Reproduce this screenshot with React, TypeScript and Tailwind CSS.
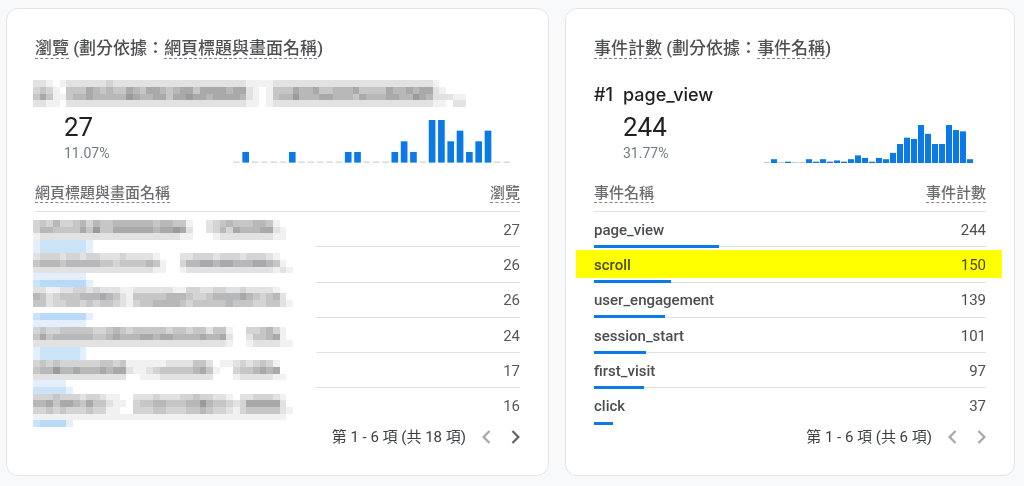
import type { ReactNode } from 'react'

// 0-9 are grey levels, a-c are blue levels, anything else stays blank
const headingMosaic = [
  '22101222222322222222222222222222111122222222222222222222222210000',
  '34310444654544654665456646666566210144465564455564444655656621000',
  '46411455655555765566466766566665210145575556655546555665576522211',
  '22110222222222222222222222222222110122222222222222222222222211022',
]

const listMosaic = [
  '34353345354455555545544100234544455410.',
  '35544446474466666656676200235365556621.',
  '1222222222222222222222110001222222221101',
  'abbbbbbba..............................',
  'abbbbbbba..............................',
  '233323323322232222100022333233323332100',
  '455545555544344445410035566566555665410',
  '222222222222222222110012222222222222121',
  'aaaaaaaa...............................',
  'bccccccca..............................',
  '221122332322211222222113322332232222100',
  '542344455565421444445554334555565434520',
  '442334434344321344555543444445444334421',
  '.......................................',
  'bccccccca..............................',
  'aaaaaaaa...............................',
  '343344444334543444443443442441003345310',
  '464555555445655566566555565562002445610',
  '222222222222222222222222222221001222211',
  'abbbbbba...............................',
  'abbbbbba...............................',
  '343433333344341111112222442011232343100',
  '455755655565662112344444564100344565600',
  '222222222222220011122222222000122222110',
  'aaaaa..................................',
  'bbbbba.................................',
  '333433323321100222322233433221022333210',
  '556466546442110344554445575443236666620',
  '334343334331100333443334454332134444421',
  '111111111111111111111111111111111111110',
  'bcccca.................................',
]

const viewsTrend = [0, 1, 0, 0, 0, 0, 1, 0, 0, 0, 0, 0, 1, 1, 0, 0, 0, 1, 2, 1, 0, 4, 4, 2, 3, 1, 2, 3, 0, 0]
const eventsTrend = [0, 3, 0, 1, 0, 0, 3, 1, 3, 1, 2, 1, 3, 6, 4, 1, 4, 3, 8, 15, 20, 19, 30, 23, 15, 15, 30, 26, 25, 3]

const viewCounts = [27, 26, 26, 24, 17, 16]

const events = [
  { name: 'page_view', count: 244 },
  { name: 'scroll', count: 150, highlight: true },
  { name: 'user_engagement', count: 139 },
  { name: 'session_start', count: 101 },
  { name: 'first_visit', count: 97 },
  { name: 'click', count: 37 },
]
const totalEvents = events.reduce((sum, e) => sum + e.count, 0)

const blues: Record<string, string> = { a: '#e3f0fb', b: '#cbe3f7', c: '#b8daf6' }

function Mosaic({ rows, label, className }: { rows: string[]; label: string; className: string }) {
  return (
    <svg
      role="img"
      aria-label={label}
      viewBox={`0 0 ${rows[0].length} ${rows.length}`}
      preserveAspectRatio="none"
      shapeRendering="crispEdges"
      className={className}
    >
      {rows.map((row, y) =>
        row.split('').map((c, x) => {
          if (blues[c]) return <rect key={`${x}-${y}`} x={x} y={y} width={1} height={1} fill={blues[c]} />
          const level = Number(c)
          if (!level) return null
          return <rect key={`${x}-${y}`} x={x} y={y} width={1} height={1} fill="#606163" fillOpacity={level * 0.09} />
        }),
      )}
    </svg>
  )
}

function Sparkline({ data, step, bar, height, className }: { data: number[]; step: number; bar: number; height: number; className: string }) {
  const max = Math.max(...data)
  return (
    <svg aria-hidden="true" viewBox={`0 0 ${step * (data.length - 1) + bar} ${height}`} className={className}>
      {data.map((v, i) => {
        const h = v ? Math.max((v / max) * height, 4) : 3
        return <rect key={i} x={i * step} y={height - h} width={bar} height={h} fill={v ? '#0b7ae6' : '#c8c8c8'} />
      })}
    </svg>
  )
}

function Term({ children }: { children: ReactNode }) {
  return <span className="border-b border-dashed border-[#80868b]">{children}</span>
}

function Card({ title, children }: { title: ReactNode; children: ReactNode }) {
  return (
    <section className="min-w-0 rounded-xl border border-[#e3e5e8] bg-white px-7 pt-[25px] pb-6">
      <h2 className="text-[17px] leading-7 font-medium whitespace-nowrap text-[#4d5054]">{title}</h2>
      {children}
    </section>
  )
}

function Headline({ value, share, children }: { value: string; share: string; children: ReactNode }) {
  return (
    <div className="mt-1 flex items-end justify-between pl-[29px]">
      <div>
        <p className="text-[26px] leading-8 text-[#202124]">{value}</p>
        <p className="text-sm leading-5 text-[#757a7f]">{share}</p>
      </div>
      {children}
    </div>
  )
}

function TableHead({ name, metric }: { name: string; metric: string }) {
  return (
    <thead>
      <tr className="h-8 border-b border-[#e0e0e0] text-[15px] leading-6 text-[#6a6e72]">
        <th scope="col" className="p-0 pt-0.5 pb-1.5 text-left font-medium"><Term>{name}</Term></th>
        <th scope="col" className="p-0 pt-0.5 pb-1.5 text-right font-medium"><Term>{metric}</Term></th>
      </tr>
    </thead>
  )
}

function Pager({ text, hasNext }: { text: string; hasNext: boolean }) {
  return (
    <div className="flex h-7 items-center justify-end text-[15px] text-[#3c4043]">
      <span>{text}</span>
      <button type="button" disabled aria-label="上一頁" className="ml-4 text-[#a8a8a8]">
        <svg viewBox="8 6 8 12" className="h-[14px] w-[9px]" fill="currentColor">
          <path d="M15.41 7.41 14 6l-6 6 6 6 1.41-1.41L10.83 12z" />
        </svg>
      </button>
      <button type="button" disabled={!hasNext} aria-label="下一頁" className="ml-5 text-[#666666] disabled:text-[#a8a8a8]">
        <svg viewBox="8 6 8 12" className="h-[14px] w-[9px]" fill="currentColor">
          <path d="M10 6 8.59 7.41 13.17 12l-4.58 4.59L10 18l6-6z" />
        </svg>
      </button>
    </div>
  )
}

export default function App() {
  return (
    <main className="grid min-h-screen grid-cols-[543fr_450fr] items-start gap-4 bg-[#f8f9fb] pt-2 pr-[9px] pl-[6px] font-[Roboto,'Noto_Sans_CJK_TC',sans-serif]">
      {/* Views */}
      <Card title={<><Term>瀏覽</Term> (劃分依據：<Term>網頁標題與畫面名稱</Term>)</>}>
        <div className="mt-[21px] flex h-6 items-end">
          <Mosaic rows={headingMosaic} label="#1" className="-ml-0.5 h-[27px] w-[433px] shrink-0" />
        </div>
        <Headline value="27" share="11.07%">
          <Sparkline data={viewsTrend} step={28} bar={20} height={128} className="mr-[10px] w-[277px]" />
        </Headline>
        <div className="relative mt-4">
          <table className="h-[244px] w-full border-collapse">
            <TableHead name="網頁標題與畫面名稱" metric="瀏覽" />
            <tbody>
              {viewCounts.map((count, i) => (
                <tr key={i} className="h-[35px] border-b border-[#e0e0e0] last:border-b-0">
                  <td className="p-0" />
                  <td className="p-0 pt-0.5 text-right text-[15px] text-[#55585c]">{count}</td>
                </tr>
              ))}
            </tbody>
          </table>
          {/* redacted page titles */}
          <div className="absolute -bottom-1 -left-0.5 w-[283px] bg-white">
            <Mosaic rows={listMosaic} label="網頁標題與畫面名稱" className="h-[207px] w-[260px]" />
          </div>
        </div>
        <Pager text="第 1 - 6 項 (共 18 項)" hasNext />
      </Card>

      {/* Events */}
      <Card title={<><Term>事件計數</Term> (劃分依據：<Term>事件名稱</Term>)</>}>
        <div className="mt-[21px] flex h-6 items-center font-[Inter,sans-serif] text-lg font-medium text-[#202124]">
          <span className="w-[29px]">#1</span>
          <span>page_view</span>
        </div>
        <Headline value="244" share="31.77%">
          <Sparkline data={eventsTrend} step={21} bar={18} height={114} className="mr-[13px] w-[209px]" />
        </Headline>
        <table className="mt-4 h-[244px] w-full border-collapse">
          <TableHead name="事件名稱" metric="事件計數" />
          <tbody>
            {events.map((e) => (
              <tr key={e.name} className="relative h-[35px] border-b border-[#e0e0e0] text-[15px] text-[#4a4d51] last:border-b-0">
                <td className="p-0 pt-0.5 font-medium">
                  {e.name}
                  <span className="absolute -bottom-[2px] left-0 h-[3px] bg-[#0b7ae6]" style={{ width: `${(e.count / totalEvents) * 100}%` }} />
                  {e.highlight && <span className="absolute top-[3px] -right-4 -left-[18px] h-7 bg-[#ffff00] mix-blend-multiply" />}
                </td>
                <td className="p-0 pt-0.5 text-right">{e.count}</td>
              </tr>
            ))}
          </tbody>
        </table>
        <Pager text="第 1 - 6 項 (共 6 項)" hasNext={false} />
      </Card>
    </main>
  )
}
